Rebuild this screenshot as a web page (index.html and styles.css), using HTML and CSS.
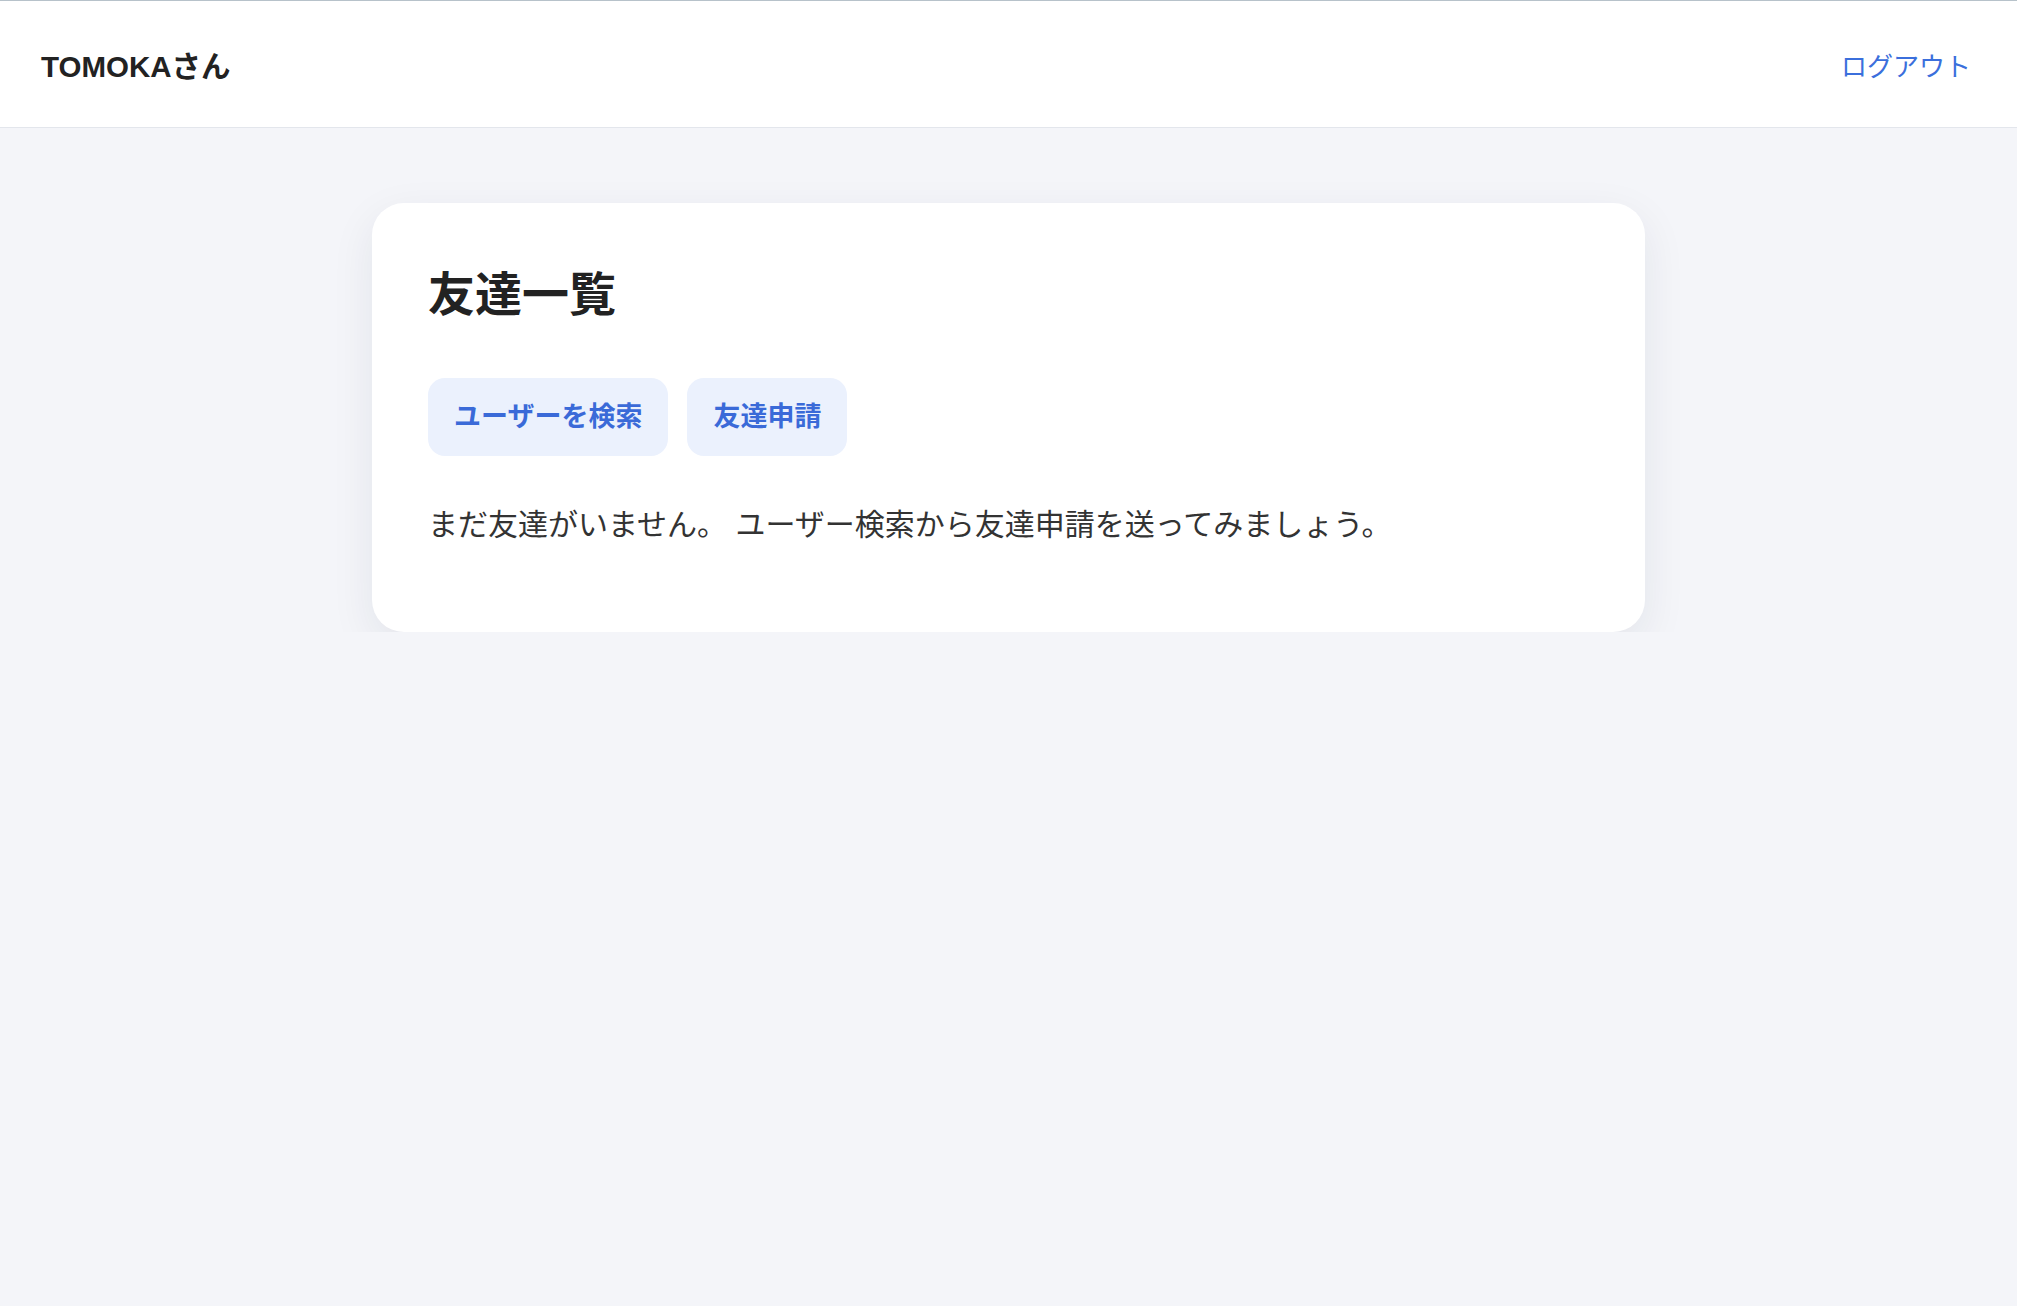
FILE: index.html
```html
<!DOCTYPE html>
<html lang="ja">
  <head>
    <meta charset="UTF-8" />
    <meta name="viewport" content="width=device-width, initial-scale=1.0" />
    <title>友達一覧</title>
    <link rel="stylesheet" href="styles.css">
  </head>
  <body>
    <header class="site-header">
      <div class="user-name">TOMOKAさん</div>
      <a class="logout-link" href="#">ログアウト</a>
    </header>

    <main class="page">
      <section class="card">
        <h1>友達一覧</h1>

        <div class="actions">
          <a class="action-btn" href="#">ユーザーを検索</a>
          <a class="action-btn" href="#">友達申請</a>
        </div>

        <p class="empty-message">まだ友達がいません。 ユーザー検索から友達申請を送ってみましょう。</p>
      </section>
    </main>
  </body>
</html>
```

FILE: styles.css
```css
body {
  font-family: "Liberation Sans", "Noto Sans CJK JP", sans-serif;
  margin: 0;
  background-color: #f4f5f9;
  color: #333;
}
a {
  text-decoration: none;
}
.site-header {
  display: flex;
  justify-content: space-between;
  align-items: center;
  height: 126px;
  padding: 0 46px 0 41px;
  background-color: #fff;
  border-top: 1px solid #b7c2ca;
  border-bottom: 1px solid #e3e6ec;
}
.user-name {
  font-size: 29.5px;
  font-weight: bold;
  color: #222;
}
.logout-link {
  font-size: 26px;
  color: #3b6fdc;
}
.page {
  display: flex;
  justify-content: center;
  padding-top: 75px;
}
.card {
  width: 1273px;
  box-sizing: border-box;
  padding: 60px 56px 56px;
  background-color: #fff;
  border-radius: 32px;
  box-shadow: 0 14px 44px rgba(30, 40, 70, 0.08);
}
h1 {
  margin: 0;
  font-size: 47px;
  line-height: 64px;
  font-weight: bold;
  color: #222;
}
.actions {
  display: flex;
  gap: 19px;
  margin-top: 51px;
}
.action-btn {
  display: inline-block;
  padding: 19px 26px;
  font-size: 27px;
  line-height: 40px;
  font-weight: bold;
  color: #3a6ad8;
  background-color: #ebf1fd;
  border-radius: 17px;
}
.empty-message {
  margin: 46px 0 28px;
  font-size: 30px;
  line-height: 46px;
  color: #333;
}
```
